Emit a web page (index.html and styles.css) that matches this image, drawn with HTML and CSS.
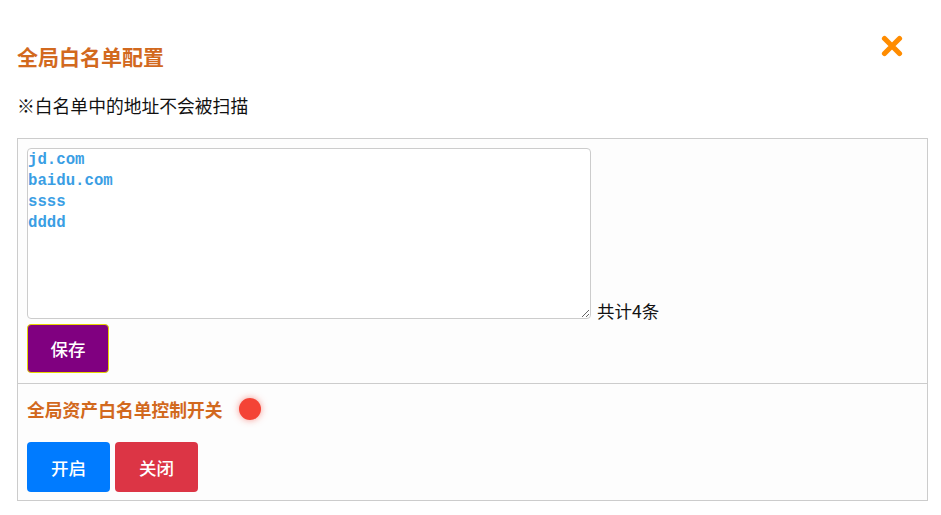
FILE: index.html
```html
<!DOCTYPE html>
<html lang="zh">
<head>
<meta charset="utf-8">
<title>全局白名单配置</title>
<link rel="stylesheet" href="styles.css">
</head>
<body>
<div class="page">
  <div class="header">
    <h1 class="title">全局白名单配置</h1>
    <button class="close" aria-label="关闭">
      <svg width="22" height="22" viewBox="0 0 22 22"><path d="M3.5 3.5 L18.5 18.5 M18.5 3.5 L3.5 18.5" stroke="#ff8c00" stroke-width="5.2" stroke-linecap="round" fill="none"/></svg>
    </button>
  </div>
  <p class="note">※白名单中的地址不会被扫描</p>
  <div class="box">
    <div class="section">
      <div class="editor-row">
        <textarea class="list">jd.com
baidu.com
ssss
dddd</textarea>
        <span class="count">共计4条</span>
      </div>
      <button class="btn btn-save">保存</button>
    </div>
    <div class="section section-switch">
      <div class="switch-row">
        <span class="switch-title">全局资产白名单控制开关</span>
        <span class="dot"></span>
      </div>
      <div class="btn-row">
        <button class="btn btn-on">开启</button>
        <button class="btn btn-off">关闭</button>
      </div>
    </div>
  </div>
</div>
</body>
</html>
```
FILE: styles.css
```css
* { box-sizing: border-box; }
body {
  margin: 0;
  background: #fff;
  font-family: "Noto Sans CJK SC", "Noto Sans", sans-serif;
  font-size: 17.5px;
  color: #111;
}
.page {
  padding: 0 13px 0 17px;
}
.header {
  display: flex;
  justify-content: space-between;
  align-items: flex-start;
  padding-top: 42px;
}
.title {
  margin: 0;
  font-size: 21px;
  line-height: 28px;
  font-weight: bold;
  color: #d2691e;
}
.close {
  margin: -7px 25px 0 0;
  padding: 0;
  border: 0;
  background: none;
  width: 22px;
  height: 22px;
  display: flex;
}
.note {
  margin: 23px 0 21px;
  line-height: 24px;
  font-size: 17.8px;
}
.box {
  border: 1px solid #ccc;
  background: #fdfdfd;
}
.section {
  padding: 9px 9px 10px;
}
.section-switch {
  border-top: 1px solid #ccc;
  padding: 12px 9px 8px;
}
.editor-row {
  display: flex;
  align-items: flex-end;
}
.list {
  width: 564px;
  height: 171px;
  border: 1px solid #ccc;
  border-radius: 4px;
  padding: 1px 0 0 0;
  margin: 0;
  font-family: "Liberation Mono", monospace;
  font-weight: bold;
  font-size: 15.7px;
  line-height: 21px;
  color: #3a9ee4;
  background: #fff;
  resize: both;
}
.count {
  margin-left: 6px;
  line-height: 18px;
  margin-bottom: -1px;
}
.btn {
  display: flex;
  align-items: center;
  justify-content: center;
  border-radius: 4px;
  color: #fff;
  font-family: "Noto Sans CJK SC", sans-serif;
  font-size: 17.5px;
  font-weight: 500;
  border: 0;
  padding: 0;
}
.btn-save {
  margin-top: 5px;
  width: 82px;
  height: 49px;
  background: #800080;
  border: 1px solid #e6d400;
}
.switch-row {
  display: flex;
  align-items: center;
  height: 26px;
}
.switch-title {
  font-size: 17.8px;
  font-weight: bold;
  color: #d2691e;
}
.dot {
  width: 22px;
  height: 22px;
  border-radius: 50%;
  background: #f44336;
  margin-left: 16px;
  box-shadow: 0 0 7px rgba(244, 67, 54, 0.55);
}
.btn-row {
  display: flex;
  gap: 5px;
  margin-top: 20px;
}
.btn-on, .btn-off {
  width: 83px;
  height: 50px;
}
.btn-on { background: #007bff; }
.btn-off { background: #dc3545; }
```
